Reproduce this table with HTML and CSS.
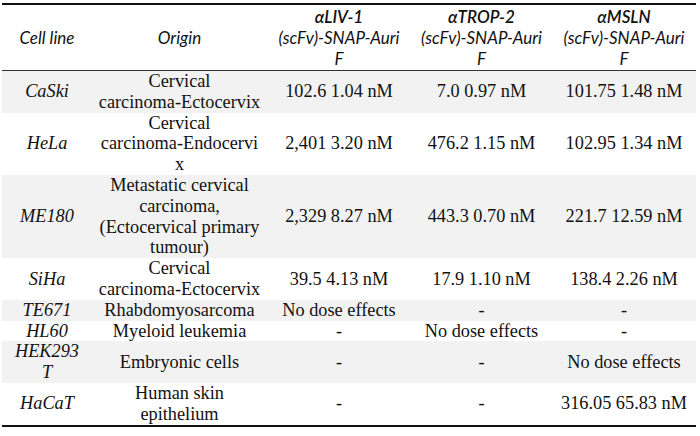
FILE: index.html
```html
<!DOCTYPE html>
<html lang="en">
<head>
<meta charset="utf-8">
<title>Cell line cytotoxicity table</title>
<link rel="stylesheet" href="styles.css">
</head>
<body>
<table class="data">
  <colgroup>
    <col class="c-line">
    <col class="c-origin">
    <col class="c-liv">
    <col class="c-trop">
    <col class="c-msln">
  </colgroup>
  <thead>
    <tr>
      <th>Cell line</th>
      <th>Origin</th>
      <th><span class="ab">αLIV-1</span><br>(scFv)-SNAP-Auri<br>F</th>
      <th><span class="ab">αTROP-2</span><br>(scFv)-SNAP-Auri<br>F</th>
      <th><span class="ab">αMSLN</span><br>(scFv)-SNAP-Auri<br>F</th>
    </tr>
  </thead>
  <tbody>
    <tr class="shade">
      <td class="name">CaSki</td>
      <td>Cervical<br>carcinoma-Ectocervix</td>
      <td>102.6 1.04 nM</td>
      <td>7.0 0.97 nM</td>
      <td>101.75 1.48 nM</td>
    </tr>
    <tr>
      <td class="name">HeLa</td>
      <td>Cervical<br>carcinoma-Endocervi<br>x</td>
      <td>2,401 3.20 nM</td>
      <td>476.2 1.15 nM</td>
      <td>102.95 1.34 nM</td>
    </tr>
    <tr class="shade">
      <td class="name">ME180</td>
      <td>Metastatic cervical<br>carcinoma,<br>(Ectocervical primary<br>tumour)</td>
      <td>2,329 8.27 nM</td>
      <td>443.3 0.70 nM</td>
      <td>221.7 12.59 nM</td>
    </tr>
    <tr>
      <td class="name">SiHa</td>
      <td>Cervical<br>carcinoma-Ectocervix</td>
      <td>39.5 4.13 nM</td>
      <td>17.9 1.10 nM</td>
      <td>138.4 2.26 nM</td>
    </tr>
    <tr class="shade">
      <td class="name">TE671</td>
      <td>Rhabdomyosarcoma</td>
      <td>No dose effects</td>
      <td>-</td>
      <td>-</td>
    </tr>
    <tr>
      <td class="name">HL60</td>
      <td>Myeloid leukemia</td>
      <td>-</td>
      <td>No dose effects</td>
      <td>-</td>
    </tr>
    <tr class="shade">
      <td class="name">HEK293<br>T</td>
      <td>Embryonic cells</td>
      <td>-</td>
      <td>-</td>
      <td>No dose effects</td>
    </tr>
    <tr>
      <td class="name">HaCaT</td>
      <td>Human skin<br>epithelium</td>
      <td>-</td>
      <td>-</td>
      <td>316.05 65.83 nM</td>
    </tr>
  </tbody>
</table>
</body>
</html>
```

FILE: styles.css
```css
html, body {
  margin: 0;
  padding: 0;
  background: #ffffff;
}

.data {
  margin: 3px 0 0 2px;
  width: 694px;
  border-collapse: collapse;
  table-layout: fixed;
  border-top: 2px solid #111;
  border-bottom: 2px solid #111;
  color: #111;
}

.c-line { width: 90px; }
.c-origin { width: 175px; }
.c-liv { width: 144px; }
.c-trop { width: 141px; }
.c-msln { width: 144px; }

.data th {
  font-family: Lato, "Liberation Sans", sans-serif;
  font-style: italic;
  font-weight: normal;
  font-size: 17px;
  line-height: 21px;
  padding: 1px 0 1px;
  text-align: center;
  vertical-align: middle;
  white-space: nowrap;
  border-bottom: 1.5px solid #333;
  color: #111;
}

.data th .ab {
  font-weight: 600;
}

.data td {
  font-family: "Liberation Serif", "Times New Roman", serif;
  font-size: 18.3px;
  line-height: 20.8px;
  padding: 0;
  text-align: center;
  vertical-align: middle;
  white-space: nowrap;
}

.data td.name {
  font-style: italic;
}

.data tr.shade td {
  background: #f2f2f2;
}
```
